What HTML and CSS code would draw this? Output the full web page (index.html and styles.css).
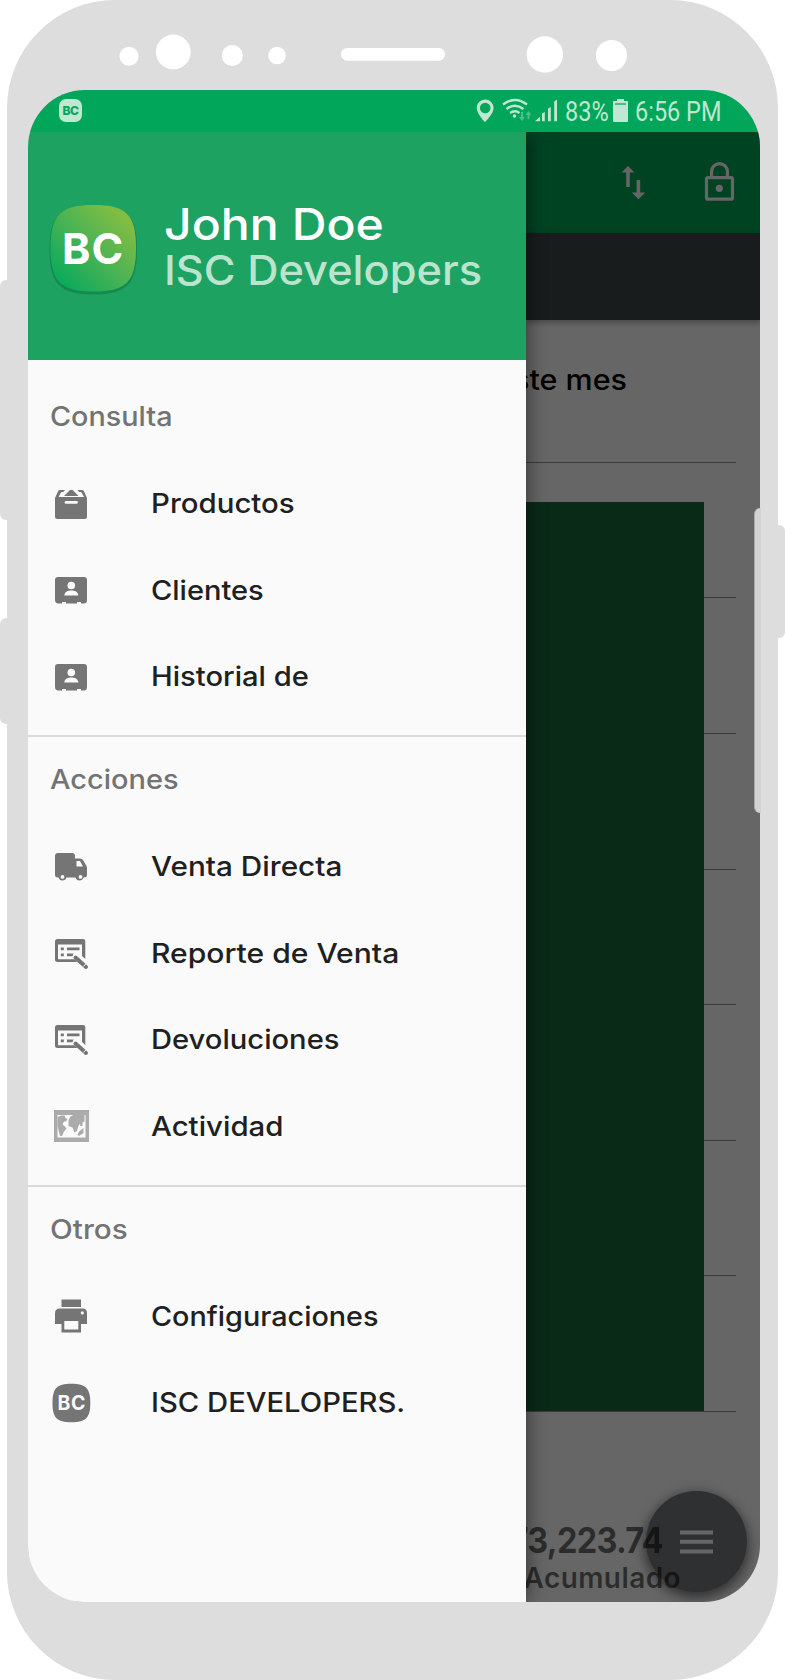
FILE: index.html
```html
<!DOCTYPE html>
<html lang="es">
<head>
<meta charset="utf-8">
<title>ISC Developers</title>
<link rel="stylesheet" href="styles.css">
</head>
<body>
<div class="device">
  <span class="side-button volume-up"></span>
  <span class="side-button volume-down"></span>
  <span class="side-button power"></span>
  <div class="phone">
    <svg class="sensors" width="771" height="90" viewBox="7 0 771 90" fill="#fff">
      <circle cx="129" cy="56.3" r="9.5"/><circle cx="173.3" cy="52" r="17.4"/>
      <circle cx="232.3" cy="55.5" r="10.5"/><circle cx="277" cy="55.5" r="8.8"/>
      <rect x="341" y="48" width="104" height="12.7" rx="6.3"/>
      <circle cx="544.8" cy="54.5" r="18.2"/><circle cx="611.5" cy="55.5" r="15.6"/>
    </svg>
    <main class="screen">
      <header class="status">
        <span class="status-logo">BC</span>
        <svg class="status-icons" width="84" height="26" viewBox="475 98 84 26" fill="#bfe7d1">
          <path fill-rule="evenodd" d="M485 99.5a8.3 8.3 0 0 0-8.3 8.6c0 6 8.3 14 8.3 14s8.6-8 8.6-14a8.4 8.4 0 0 0-8.6-8.6zm.2 3.2a5.3 5.3 0 1 1 0 10.6 5.3 5.3 0 0 1 0-10.6z"/>
          <g fill="none" stroke="#bfe7d1" stroke-width="2.300"><path d="M503 104.500q12-9 24 0"/><path d="M506.500 109q8.500-6.500 17 0"/><path d="M510 113q5-3.500 9.500 0"/></g>
          <circle cx="514.500" cy="116" r="1.700"/>
          <path opacity=".4" d="M521 112h2v5h2l-3 4-3-4h2zM527.500 119v-4h-2l3-4 3 4h-2v4z"/>
          <path d="M535 121.300l5-4.500v4.500zM542 113.500l2.800-1.500v9.300h-2.800zM548 108.500l2.800-1.500v14.300h-2.800zM554.200 101.500l2.800-2v21.800h-2.800z"/>
        </svg>
        <span class="battery-level"><span class="narrow">83%</span></span>
        <svg class="battery" width="15" height="23" viewBox="0 0 15 23"><path fill="#bfe7d1" d="M4 0h7v2h3q1 0 1 1v19q0 1-1 1H1q-1 0-1-1V3q0-1 1-1h3z"/><path fill="#4fbb84" d="M2 4h11v2H2z"/></svg>
        <span class="clock"><span class="narrow">6:56 PM</span></span>
      </header>
      <div class="body">
        <aside class="drawer">
          <div class="profile">
            <svg class="logo" width="92" height="94" viewBox="48 202 92 94">
              <defs><linearGradient id="brand" x1="0" y1="1" x2="1" y2="0"><stop offset="0.1" stop-color="#08aa5c"/><stop offset=".5" stop-color="#4cb354"/><stop offset=".85" stop-color="#82bd43"/></linearGradient></defs>
              <path fill="#14804a" opacity=".75" d="M93.500 205.500c34 0 43.500 10 43.500 44s-9.500 45-43.500 45-44-11-44-45 10-44 44-44z"/>
              <path fill="url(#brand)" d="M93.500 205c33 0 42.500 9.500 42.500 43s-9.500 43.500-42.500 43.500-43-10-43-43.500 10-43 43-43z"/>
              <text class="logo-text" x="62" y="264">BC</text>
            </svg>
            <div class="names"><div class="user">John Doe</div><div class="company">ISC Developers</div></div>
          </div>
          <nav>
            <section class="group">
              <h2 class="t-consulta">Consulta</h2>
              <a class="item"><svg class="icon" viewBox="0 0 40 40"><path fill-rule="evenodd" d="M9 6h5l-1.700 2h-2L7.500 13H33l-2.800-5h-2l-1.700-2H31q1.200 0 1.800 1l3.200 7v18.500q0 2.500-2.500 2.500h-27Q4 35 4 32.500V14l3.200-7Q7.800 6 9 6zM15 17a1.400 1.400 0 0 0 0 2.800h10.500a1.400 1.400 0 0 0 0-2.800z"/><path d="M13 12l5.500-5.500q1.800-1.500 3.600 0L27.500 12z"/></svg><span class="t-productos">Productos</span></a>
              <a class="item"><svg class="icon" viewBox="0 0 40 40"><path d="M7 7h26q3 0 3 3v20q0 3-2.500 3.500H30v-1.500h-4v1.500H15v-1.500h-4v1.500H7q-3-.5-3-3.500V10q0-3 3-3z"/><g fill="#fafafa"><circle cx="20.300" cy="15.500" r="3.800"/><path d="M13.300 25.500c0-3.700 4-5 7-5s7 1.300 7 5z"/></g></svg><span class="t-clientes">Clientes</span></a>
              <a class="item"><svg class="icon" viewBox="0 0 40 40"><path d="M7 7h26q3 0 3 3v20q0 3-2.500 3.500H30v-1.500h-4v1.500H15v-1.500h-4v1.500H7q-3-.5-3-3.500V10q0-3 3-3z"/><g fill="#fafafa"><circle cx="20.300" cy="15.500" r="3.800"/><path d="M13.300 25.500c0-3.700 4-5 7-5s7 1.300 7 5z"/></g></svg><span class="t-historial">Historial de</span></a>
            </section>
            <section class="group">
              <h2 class="t-acciones">Acciones</h2>
              <a class="item"><svg class="icon" viewBox="0 0 40 40"><path fill-rule="evenodd" d="M7 6h14q3 0 3 3v2.500h5q2 0 3 1.500l3.500 6q.5 1 .5 2V28q0 2.500-3.500 2.500a4.200 4.200 0 0 1-8 0H15.500a4.200 4.200 0 0 1-8 0Q4 30.500 4 28V9q0-3 3-3zm18.500 8v5.500H32L29 14zM11.500 28a1.900 1.900 0 1 0 0 3.800 1.900 1.900 0 0 0 0-3.800zm18 0a1.900 1.900 0 1 0 0 3.800 1.900 1.900 0 0 0 0-3.800z"/></svg><span class="t-directa">Venta Directa</span></a>
              <a class="item"><svg class="icon" viewBox="0 0 40 40"><path fill-rule="evenodd" d="M6.500 6H32q2.300 0 2.300 2.300V26L31 23V11.500H7v14.700h16.500L26.500 29h-20Q4 29 4 26.500v-18Q4 6 6.500 6zM9.800 14.500h3v2.800h-3zM16 14.500h12.500v2.800H16zM9.800 20.500h3v2.800h-3zM16 20.500h6.500l-1 2.800H16z"/><path d="M24.500 24.500l10.500 9.500" fill="none" stroke="#757575" stroke-width="4" stroke-linecap="round"/><path d="M32.300 33.500l2.500-2.500" stroke="#fafafa" stroke-width="1"/></svg><span class="t-reporte">Reporte de Venta</span></a>
              <a class="item"><svg class="icon" viewBox="0 0 40 40"><path fill-rule="evenodd" d="M6.500 5H32q2.300 0 2.300 2.300V25L31 22V10.500H7v14.700h16.500L26.500 28h-20Q4 28 4 25.500v-18Q4 5 6.500 5zM9.800 13.500h3v2.800h-3zM16 13.500h12.500v2.800H16zM9.800 19.500h3v2.800h-3zM16 19.500h6.500l-1 2.800H16z"/><path d="M24.500 23.500l10.500 9.500" fill="none" stroke="#757575" stroke-width="4" stroke-linecap="round"/><path d="M32.300 32.500l2.500-2.500" stroke="#fafafa" stroke-width="1"/></svg><span class="t-devoluciones">Devoluciones</span></a>
              <a class="item"><svg class="icon map" viewBox="0 0 40 40"><path fill-rule="evenodd" d="M3 4h35v32H3zM6.500 9v22.500h28V9z"/><path d="M6.500 11l4-1.500h3l1 2.500 2 1-1.500 2.500h-2l-1.500 3 2 1.500 2 2.500-2.500 3-2 4.500L9 30l-1.500-6-1-4zM17.500 14l2-3.500 3-1.500h11v6.500l-2 1v3.500h-2l-1-2-1.500 3-1 4-2.500 1.500-2-5-4-1.500zM28.500 25l4-3v5l-4.500 3-1.500-1.500z"/></svg><span class="t-actividad">Actividad</span></a>
            </section>
            <section class="group">
              <h2 class="t-otros">Otros</h2>
              <a class="item"><svg class="icon" viewBox="0 0 40 40"><path fill-rule="evenodd" d="M10.500 3.500H30V11H10.500zM9 12.500h22.500q4.500 0 4.500 4.500v11h-6v8.500H10.500V28H4V17.500q0-5 5-5zM13.300 25v8.500h14V25zm18-9.700a1.600 1.600 0 1 0 0 3.200 1.600 1.600 0 0 0 0-3.200z"/></svg><span class="t-configuraciones">Configuraciones</span></a>
              <a class="item"><svg class="icon" viewBox="0 0 40 40"><path d="M20.300.700c14.500 0 19 4.500 19 19.300s-4.500 19.300-19 19.300S1.500 34.800 1.500 20 5.800.700 20.300.700z"/><text class="icon-text" x="6.500" y="27.200">BC</text></svg><span class="t-isc">ISC DEVELOPERS.</span></a>
            </section>
          </nav>
        </aside>
        <div class="content">
          <div class="toolbar">
            <svg width="140" height="60" viewBox="610 150 140 60">
              <path fill="#666" d="M628 166l6.500 6.500h-4.700V187h-3.600v-14.500h-4.700zM636.600 180h3.600v12.500h5l-6.700 6.700-6.700-6.700h4.800z"/>
              <g fill="none" stroke="#666" stroke-width="3.200"><rect x="706.500" y="177.600" width="26" height="21.600" rx="1.500"/><path d="M711.600 177v-5.500a7.900 7.900 0 0 1 15.800 0v5.500"/></g>
              <circle cx="719.300" cy="188.300" r="3.600" fill="#666"/>
            </svg>
          </div>
          <div class="tabs"></div>
          <div class="dashboard">
            <div class="period">Ventas de este mes</div>
            <div class="chart">
              <svg width="210" height="951" viewBox="526 461 210 951">
                <path stroke="#3b3b3b" d="M526 462.500h210M526 597.500h210M526 733.500h210M526 869.500h210M526 1004.500h210M526 1140.500h210M526 1275.500h210M526 1411.500h210"/>
                <path fill="#0a2a18" d="M526 502h178v909H526z"/>
              </svg>
            </div>
          </div>
          <button class="fab" aria-label="Menú"><svg width="33" height="24" fill="#666"><path d="M0 0.500h33v4H0zM0 9.700h33v4H0zM0 19.500h33v4H0z"/></svg></button>
          <div class="total"><div class="amount">73,223.74</div><div class="caption">Acumulado</div></div>
        </div>
      </div>
    </main>
    <span class="edge"></span>
  </div>
</div>
</body>
</html>
```
FILE: styles.css
```css
* { box-sizing: border-box; }
body { margin: 0; background: #fff; font-family: "Inter", sans-serif; font-weight: 500; }
.device { position: relative; width: 785px; height: 1680px; padding: 0 7px; overflow: hidden; }
.side-button { position: absolute; width: 14px; background: #ddd; border-radius: 6px; }
.volume-up { left: 0; top: 280px; height: 240px; }
.volume-down { left: 0; top: 618px; height: 106px; }
.power { right: 0; top: 525px; height: 113px; }
.phone { position: relative; height: 1680px; background: #ddd; border-radius: 108px; }
.sensors { display: block; }
.screen { margin-left: 21px; width: 732.4px; height: 1512px; border-radius: 57px; overflow: hidden; }
.edge { position: absolute; left: 747px; top: 508px; width: 7px; height: 305px; background: #d2d2d2; border-radius: 6px 0 0 6px; border-left: 1px solid #aaa; }

.status { display: flex; align-items: flex-start; height: 42px; background: #02a65a; color: #bfe7d1; padding: 9px 0 0 31px; }
.status-logo { width: 23px; height: 23px; border-radius: 7px; background: #bfe7d1; color: #02a65a; font-size: 12px; line-height: 24px; font-weight: 800; letter-spacing: -.4px; text-align: center; }
.status-icons { margin: -1px 0 0 393px; }
.battery-level { width: 54px; padding-left: 6px; }
.clock { padding-left: 7px; }
.narrow { display: inline-block; font: 400 27px/27px "Roboto", sans-serif; transform: scaleX(.87); transform-origin: 0 0; white-space: nowrap; }
.battery { flex: none; }

.body { display: flex; height: 1470px; overflow: hidden; }
.drawer { position: relative; z-index: 2; width: 498px; flex: none; background: #fafafa; box-shadow: 2px 0 18px rgba(0,0,0,.45); }
.profile { display: flex; align-items: center; height: 228px; padding: 1px 0 0 20px; background: #1da262; }
.logo { margin-top: 4px; flex: none; }
.logo-text { font-size: 43px; font-weight: 700; letter-spacing: 1px; fill: #fff; }
.names { margin-left: 24px; line-height: 46px; white-space: nowrap; }
.user { font-size: 44px; color: #fff; transform: scaleX(1.095); transform-origin: 0 50%; }
.company { font-size: 41px; color: #bbe4cf; transform: scaleX(1.057); transform-origin: 0 50%; }
nav { padding-top: 14.2px; }
.group { padding-bottom: 15px; border-bottom: 2px solid #dadada; }
.group:last-child { border-bottom: 0; }
h2 { margin: 0 0 0 22px; font-size: 27px; font-weight: 500; line-height: 86.5px; color: #737373; transform-origin: 0 50%; }
.item { display: flex; align-items: center; height: 86.5px; padding-left: 23.4px; font-size: 27px; color: #202020; white-space: nowrap; }
.item span { transform-origin: 0 50%; }
.icon { width: 40px; height: 40px; margin-right: 59.6px; fill: #757575; flex: none; }
.icon.map { fill: #ababab; }
.icon-text { font-size: 19.5px; font-weight: 700; letter-spacing: .6px; fill: #fafafa; }
.t-consulta { transform: scaleX(1.065); }
.t-acciones { transform: scaleX(1.073); }
.t-otros { transform: scaleX(1.1); }
.item .t-productos { transform: scaleX(1.09); }
.item .t-clientes { transform: scaleX(1.075); }
.item .t-historial { transform: scaleX(1.08); }
.item .t-directa { transform: scaleX(1.1); }
.item .t-reporte { transform: scaleX(1.113); }
.item .t-devoluciones { transform: scaleX(1.08); }
.item .t-actividad { transform: scaleX(1.09); }
.item .t-configuraciones { transform: scaleX(1.066); }
.item .t-isc { transform: scaleX(1.082); }

.content { position: relative; width: 235px; height: 1470px; background: #666; flex: none; }
.toolbar { display: flex; justify-content: flex-end; height: 101px; padding: 18px 11px 0 0; background: #004323; }
.tabs { height: 87px; background: #191c1d; box-shadow: 0 2px 6px rgba(0,0,0,.35); }
.dashboard { display: flex; flex-direction: column; }
.period { align-self: flex-end; margin: 43px 134px 0 0; line-height: 34px; font-size: 28px; color: #000; white-space: nowrap; transform: scaleX(1.09); transform-origin: 100% 50%; }
.chart { margin-top: 64px; }
.chart svg { display: block; }
.fab { position: absolute; left: 120px; top: 1359px; width: 101px; height: 101px; padding: 0; border: 0; border-radius: 50%; background: #2f3031; display: flex; align-items: center; justify-content: center; box-shadow: 0 4px 12px 2px rgba(0,0,0,.5); }
.total { position: absolute; right: 80px; top: 1387px; text-align: right; color: rgba(0,0,0,.56); }
.amount { margin-right: 18px; font-size: 35px; font-weight: 700; line-height: 42px; letter-spacing: -.8px; transform: scaleX(.93); transform-origin: 100% 50%; }
.caption { font-size: 28px; font-weight: 600; line-height: 34px; letter-spacing: .42px; }
```
